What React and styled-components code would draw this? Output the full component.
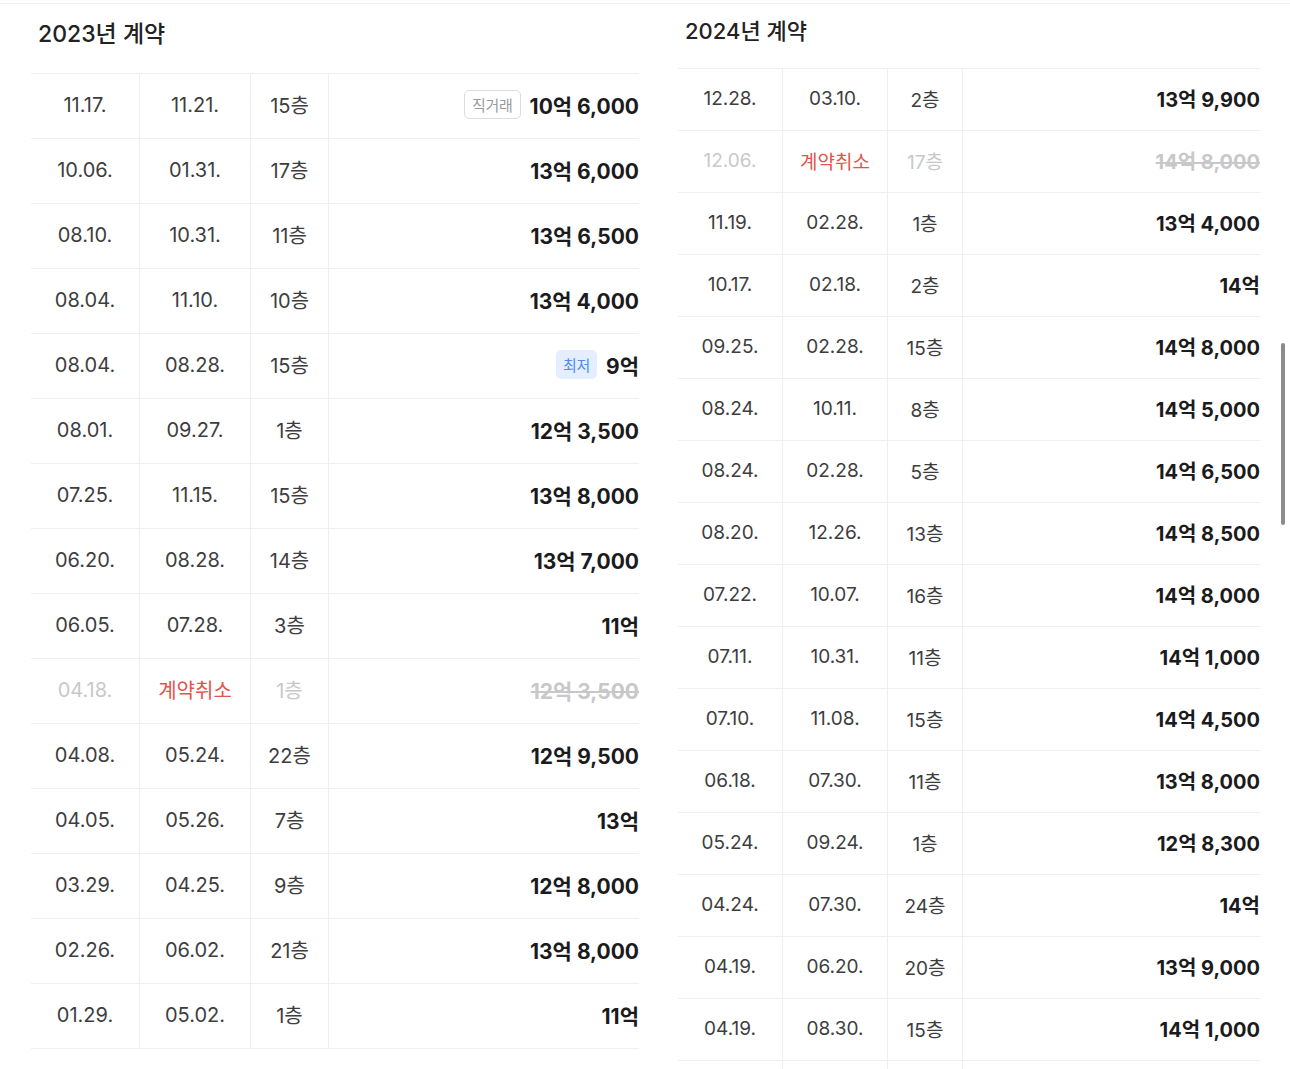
import React from "react";
import styled, { createGlobalStyle, css } from "styled-components";

const GlobalStyle = createGlobalStyle`
  html, body {
    margin: 0;
    padding: 0;
    background: #ffffff;
  }
  body {
    font-family: "Inter", "Noto Sans CJK KR", sans-serif;
    color: #222;
  }
`;

const deals2023 = [
  { date: "11.17.", pay: "11.21.", floor: "15층", price: "10억 6,000", tag: "direct" },
  { date: "10.06.", pay: "01.31.", floor: "17층", price: "13억 6,000" },
  { date: "08.10.", pay: "10.31.", floor: "11층", price: "13억 6,500" },
  { date: "08.04.", pay: "11.10.", floor: "10층", price: "13억 4,000" },
  { date: "08.04.", pay: "08.28.", floor: "15층", price: "9억", tag: "lowest" },
  { date: "08.01.", pay: "09.27.", floor: "1층", price: "12억 3,500" },
  { date: "07.25.", pay: "11.15.", floor: "15층", price: "13억 8,000" },
  { date: "06.20.", pay: "08.28.", floor: "14층", price: "13억 7,000" },
  { date: "06.05.", pay: "07.28.", floor: "3층", price: "11억" },
  { date: "04.18.", pay: "계약취소", floor: "1층", price: "12억 3,500", cancelled: true },
  { date: "04.08.", pay: "05.24.", floor: "22층", price: "12억 9,500" },
  { date: "04.05.", pay: "05.26.", floor: "7층", price: "13억" },
  { date: "03.29.", pay: "04.25.", floor: "9층", price: "12억 8,000" },
  { date: "02.26.", pay: "06.02.", floor: "21층", price: "13억 8,000" },
  { date: "01.29.", pay: "05.02.", floor: "1층", price: "11억" },
];

const deals2024 = [
  { date: "12.28.", pay: "03.10.", floor: "2층", price: "13억 9,900" },
  { date: "12.06.", pay: "계약취소", floor: "17층", price: "14억 8,000", cancelled: true },
  { date: "11.19.", pay: "02.28.", floor: "1층", price: "13억 4,000" },
  { date: "10.17.", pay: "02.18.", floor: "2층", price: "14억" },
  { date: "09.25.", pay: "02.28.", floor: "15층", price: "14억 8,000" },
  { date: "08.24.", pay: "10.11.", floor: "8층", price: "14억 5,000" },
  { date: "08.24.", pay: "02.28.", floor: "5층", price: "14억 6,500" },
  { date: "08.20.", pay: "12.26.", floor: "13층", price: "14억 8,500" },
  { date: "07.22.", pay: "10.07.", floor: "16층", price: "14억 8,000" },
  { date: "07.11.", pay: "10.31.", floor: "11층", price: "14억 1,000" },
  { date: "07.10.", pay: "11.08.", floor: "15층", price: "14억 4,500" },
  { date: "06.18.", pay: "07.30.", floor: "11층", price: "13억 8,000" },
  { date: "05.24.", pay: "09.24.", floor: "1층", price: "12억 8,300" },
  { date: "04.24.", pay: "07.30.", floor: "24층", price: "14억" },
  { date: "04.19.", pay: "06.20.", floor: "20층", price: "13억 9,000" },
  { date: "04.19.", pay: "08.30.", floor: "15층", price: "14억 1,000" },
  { date: "", pay: "", floor: "", price: "" },
];

const Page = styled.div`
  display: flex;
  height: 1069px;
  overflow: hidden;
  position: relative;
`;

const Panel = styled.section`
  box-sizing: border-box;
  flex: 0 0 ${(p) => p.$width}px;
  padding: ${(p) => p.$pad};
  border-top: 1px solid #f0f0f2;
  margin-top: 3px;
  display: flex;
  flex-direction: column;
`;

const Title = styled.h2`
  box-sizing: border-box;
  flex-shrink: 0;
  margin: 0;
  padding: ${(p) => p.$top}px 0 0 7px;
  height: ${(p) => p.$height}px;
  font-size: ${(p) => p.$size}px;
  line-height: 30px;
  font-weight: 500;
  color: #222;
  letter-spacing: 0;
`;

const Table = styled.div`
  flex-shrink: 0;
  border-top: 1px solid #efeff1;
`;

const Row = styled.div`
  box-sizing: border-box;
  display: grid;
  grid-template-columns: ${(p) => p.$cols};
  height: ${(p) => p.$height}px;
  border-bottom: 1px solid #efeff1;
  font-size: ${(p) => p.$font}px;
`;

const Cell = styled.div`
  display: flex;
  align-items: center;
  justify-content: center;
  padding-bottom: 3px;
  border-right: 1px solid #efeff1;
  color: ${(p) => (p.$muted ? "#c8c8ca" : p.$red ? "#e2534c" : "#3d3d40")};
  letter-spacing: 0;
`;

const PriceCell = styled.div`
  display: flex;
  align-items: center;
  justify-content: flex-end;
  gap: 9px;
  padding-bottom: 3px;
`;

const Price = styled.span`
  font-weight: 700;
  font-size: ${(p) => p.$size}px;
  letter-spacing: 0;
  color: #1b1b1d;
  ${(p) =>
    p.$cancelled &&
    css`
      color: #c8c8ca;
      text-decoration: line-through;
      text-decoration-thickness: 2px;
    `}
`;

const Tag = styled.span`
  box-sizing: border-box;
  height: 29px;
  display: inline-flex;
  align-items: center;
  padding: 0 7px;
  border-radius: 5px;
  font-size: 15px;
  letter-spacing: -0.3px;
  ${(p) =>
    p.$kind === "direct"
      ? css`
          border: 1px solid #dcdcde;
          color: #9a9a9d;
          background: #fff;
        `
      : css`
          background: #e4eefe;
          color: #4d8df0;
        `}
`;

const Scrollbar = styled.div`
  position: absolute;
  right: 5px;
  top: 343px;
  width: 4px;
  height: 182px;
  border-radius: 2px;
  background: #8c8c8e;
`;

const DealTable = ({ deals, cols, rowHeight, font, priceSize }) => (
  <Table>
    {deals.map((d, i) => (
      <Row key={i} $cols={cols} $height={rowHeight} $font={font}>
        <Cell $muted={d.cancelled}>{d.date}</Cell>
        <Cell $red={d.cancelled}>{d.pay}</Cell>
        <Cell $muted={d.cancelled}>{d.floor}</Cell>
        <PriceCell>
          {d.tag && <Tag $kind={d.tag}>{d.tag === "direct" ? "직거래" : "최저"}</Tag>}
          <Price $size={priceSize} $cancelled={d.cancelled}>
            {d.price}
          </Price>
        </PriceCell>
      </Row>
    ))}
  </Table>
);

export default function App() {
  return (
    <>
      <GlobalStyle />
      <Page>
        <Panel $width={648} $pad="0 9px 0 31px">
          <Title $size={23} $top={15} $height={69}>2023년 계약</Title>
          <DealTable
            deals={deals2023}
            cols="109px 111px 78px 1fr"
            rowHeight={65}
            font={20}
            priceSize={21}
          />
        </Panel>
        <Panel $width={642} $pad="0 30px 0 30px">
          <Title $size={22} $top={12} $height={64}>2024년 계약</Title>
          <DealTable
            deals={deals2024}
            cols="105px 105px 75px 1fr"
            rowHeight={62}
            font={19}
            priceSize={20}
          />
        </Panel>
        <Scrollbar />
      </Page>
    </>
  );
}
